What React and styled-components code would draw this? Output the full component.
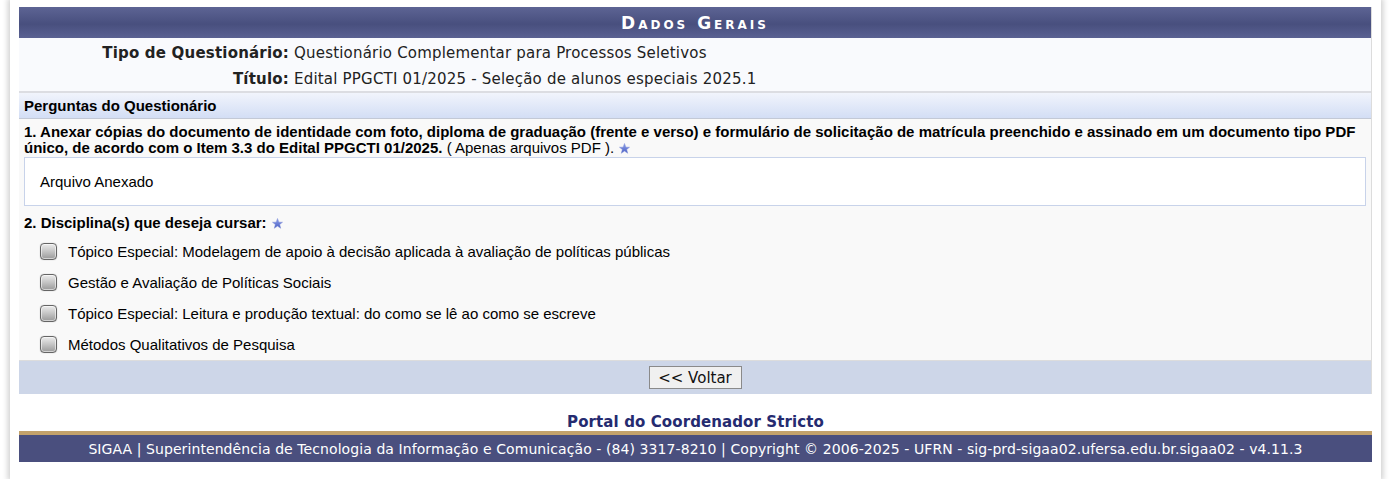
import React from 'react'
import styled, { createGlobalStyle } from 'styled-components'

const GlobalStyle = createGlobalStyle`
  html, body {
    margin: 0;
    padding: 0;
    background: #fff;
  }
`

const Page = styled.div`
  margin: 0 10px;
  padding: 7px 9px 0;
  min-height: 479px;
  box-sizing: border-box;
  background: #fff;
  box-shadow: 0 0 6px 2px rgba(0, 0, 0, 0.2);
`

const Panel = styled.div`
  border-right: 1px solid #dcdcdc;
`

const Caption = styled.div`
  height: 31px;
  display: flex;
  align-items: center;
  justify-content: center;
  background: linear-gradient(#5d6494, #484f7e 55%, #5a6192);
  color: #fff;
  font-family: 'DejaVu Sans', Verdana, sans-serif;
  font-weight: bold;
  font-variant: small-caps;
  letter-spacing: 3px;
  font-size: 17px;
`

const InfoBlock = styled.div`
  background: #f9fafd;
  padding: 2px 0 0;
  height: 51px;
  border-bottom: 2px solid #dcdde2;
`

const InfoRow = styled.div`
  display: grid;
  grid-template-columns: 270px 1fr;
  column-gap: 5px;
  height: 26px;
  align-items: center;
  font-family: 'DejaVu Sans', Verdana, sans-serif;
  font-size: 15px;
  letter-spacing: 0.2px;
  color: #222;
`

const InfoLabel = styled.span`
  text-align: right;
  font-weight: bold;
`

const SubHeader = styled.div`
  height: 25px;
  display: flex;
  align-items: center;
  padding-left: 5px;
  background: linear-gradient(#f1f4fc, #d3def5);
  border-bottom: 1px solid #c3c9d6;
  font-family: 'Liberation Sans', Arial, sans-serif;
  font-weight: bold;
  font-size: 15px;
  color: #000;
`

const Questions = styled.div`
  background: #f9f9f9;
  padding: 5px 5px 0;
  font-family: 'Liberation Sans', Arial, sans-serif;
  font-size: 15px;
  color: #000;
  border-bottom: 1px solid #dcdcdc;
`

const Question = styled.div`
  line-height: 16px;
  margin-top: ${({ $gap }) => $gap || 0}px;

  b {
    font-weight: bold;
  }
`

const Answer = styled.div`
  margin-top: 1px;
  background: #fff;
  border: 1px solid #c8d3ea;
  padding: 15px 15px;
  line-height: 17px;
`

const Options = styled.div`
  margin-top: 5px;
`

const Option = styled.label`
  display: flex;
  align-items: center;
  height: 31px;
  padding-left: 16px;
  gap: 11px;
`

const Check = styled.span`
  width: 15px;
  height: 15px;
  border: 1px solid #656565;
  border-radius: 4px;
  background: linear-gradient(#ececec, #c4c4c4 50%, #9a9a9a);
  box-shadow: inset 0 0 0 1px rgba(255, 255, 255, 0.55), 0 0 1px rgba(0, 0, 0, 0.35);
  flex-shrink: 0;
`

const StarIcon = styled.svg`
  width: 11px;
  height: 11px;
  margin-left: 5px;
  vertical-align: -1px;
`

const ButtonBar = styled.div`
  height: 33px;
  display: flex;
  align-items: center;
  justify-content: center;
  background: #cdd6e8;
`

const Button = styled.button`
  height: 23px;
  width: 93px;
  padding: 0;
  background: #f0f0f0;
  border: 1px solid #8a8a8a;
  font-family: 'DejaVu Sans', Verdana, sans-serif;
  font-size: 15px;
  color: #111;
`

const PortalName = styled.div`
  margin-top: 20px;
  text-align: center;
  font-family: 'DejaVu Sans', Verdana, sans-serif;
  font-weight: bold;
  font-size: 15px;
  letter-spacing: 0.1px;
  color: #252b70;
  line-height: 17px;
`

const Footer = styled.div`
  border-top: 4px solid #c3a26b;
  background: #4a4f7e;
  height: 27px;
  display: flex;
  align-items: center;
  justify-content: center;
  color: #fff;
  font-family: 'DejaVu Sans', Verdana, sans-serif;
  font-size: 14px;
  letter-spacing: 0.08px;
`

const Star = () => (
  <StarIcon viewBox="0 0 24 24">
    <defs>
      <linearGradient id="starFill" x1="0" y1="0" x2="0" y2="1">
        <stop offset="0" stopColor="#8fa0ea" />
        <stop offset="1" stopColor="#4a5fc4" />
      </linearGradient>
    </defs>
    <polygon
      points="12,1 15,9 23,9.3 16.8,14.2 19,22.5 12,17.7 5,22.5 7.2,14.2 1,9.3 9,9"
      fill="url(#starFill)"
      stroke="#7f8fd8"
      strokeWidth="1"
    />
  </StarIcon>
)

const disciplinas = [
  'Tópico Especial: Modelagem de apoio à decisão aplicada à avaliação de políticas públicas',
  'Gestão e Avaliação de Políticas Sociais',
  'Tópico Especial: Leitura e produção textual: do como se lê ao como se escreve',
  'Métodos Qualitativos de Pesquisa',
]

const App = () => {
  return (
    <>
      <GlobalStyle />
      <Page>
        <Panel>
          <Caption>Dados Gerais</Caption>
          <InfoBlock>
            <InfoRow>
              <InfoLabel>Tipo de Questionário:</InfoLabel>
              <span>Questionário Complementar para Processos Seletivos</span>
            </InfoRow>
            <InfoRow>
              <InfoLabel>Título:</InfoLabel>
              <span>Edital PPGCTI 01/2025 - Seleção de alunos especiais 2025.1</span>
            </InfoRow>
          </InfoBlock>
          <SubHeader>Perguntas do Questionário</SubHeader>
          <Questions>
            <Question>
              <b>
                1. Anexar cópias do documento de identidade com foto, diploma de graduação (frente e verso) e
                formulário de solicitação de matrícula preenchido e assinado em um documento tipo PDF único, de
                acordo com o Item 3.3 do Edital PPGCTI 01/2025.
              </b>{' '}
              ( Apenas arquivos PDF ).
              <Star />
            </Question>
            <Answer>Arquivo Anexado</Answer>
            <Question $gap={9}>
              <b>2. Disciplina(s) que deseja cursar:</b>
              <Star />
            </Question>
            <Options>
              {disciplinas.map((d) => (
                <Option key={d}>
                  <Check />
                  {d}
                </Option>
              ))}
            </Options>
          </Questions>
          <ButtonBar>
            <Button>&lt;&lt; Voltar</Button>
          </ButtonBar>
        </Panel>
        <PortalName>Portal do Coordenador Stricto</PortalName>
        <Footer>
          SIGAA | Superintendência de Tecnologia da Informação e Comunicação - (84) 3317-8210 | Copyright © 2006-2025 -
          UFRN - sig-prd-sigaa02.ufersa.edu.br.sigaa02 - v4.11.3
        </Footer>
      </Page>
    </>
  )
}

export default App
